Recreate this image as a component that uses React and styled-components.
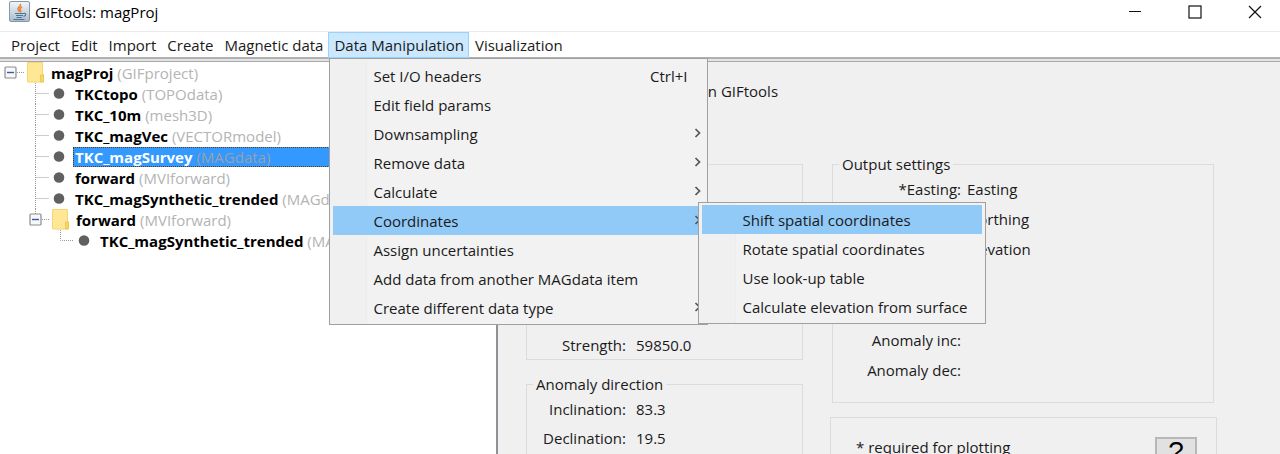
import React from "react";
import styled, { createGlobalStyle } from "styled-components";

const Global = createGlobalStyle`
  * { box-sizing: border-box; }
  body { margin: 0; background: #fff; }
  body, button { font: 15px/20px "Open Sans", "Noto Sans", sans-serif; color: #1a1a1a; }
`;

const Window = styled.div`
  display: flex;
  flex-direction: column;
  height: 100vh;
  overflow: hidden;
`;

const TitleBar = styled.header`
  display: flex;
  align-items: center;
  flex: none;
  height: 31px;
  padding: 0 8px 7px 9px;
  gap: 5px;
  color: #000;
`;

const Title = styled.h1`
  flex: 1;
  margin: 0;
  font-size: 15px;
  font-weight: 400;
`;

const WindowButton = styled.button`
  display: grid;
  place-items: center;
  width: 35px;
  height: 24px;
  margin-left: 20px;
  padding: 0;
  border: 0;
  background: none;
`;

const MenuBar = styled.nav`
  display: flex;
  flex: none;
  height: 31px;
  padding-left: 5px;
  border-top: 1px solid #ebebeb;
  border-bottom: 1px solid #a5a9ae;
  box-shadow: inset 0 -2px #e4e4e4, inset 0 -4px #b0b0b0;
`;

const MenuSlot = styled.div`
  position: relative;
  height: 26px;
`;

const MenuButton = styled.button`
  height: 100%;
  padding: 0 4px 0 5px;
  border: 1px solid ${(p) => (p.$open ? "#99d1ff" : "transparent")};
  background: ${(p) => (p.$open ? "#cce8ff" : "transparent")};
  white-space: nowrap;
`;

const Popup = styled.ul`
  position: absolute;
  z-index: 2;
  top: ${(p) => (p.$nested ? "-4px" : "100%")};
  left: ${(p) => (p.$nested ? "calc(100% - 6px)" : "1px")};
  width: ${(p) => (p.$nested ? 288 : 379)}px;
  margin: 0;
  padding: 2px 3px;
  list-style: none;
  border: 1px solid #a0a0a0;
  background: linear-gradient(90deg, #f0f0f0 36px, #ececec 36px, #ececec 37px, #f2f2f2 37px);
`;

const PopupItem = styled.li`
  position: relative;
`;

const PopupButton = styled.button`
  display: flex;
  align-items: center;
  justify-content: space-between;
  width: 100%;
  height: 29px;
  padding: 0 2px 0 40px;
  border: 0;
  background: ${(p) => (p.$active ? "#91c9f7" : "transparent")};
  text-align: left;
  white-space: nowrap;
`;

const Shortcut = styled.span`
  padding-right: 15px;
`;

const Split = styled.main`
  display: grid;
  grid-template-columns: 31fr 49fr;
  flex: 1;
  min-height: 0;
`;

const TreePane = styled.section`
  min-width: 0;
  overflow: hidden;
  background: #fff;
`;

const Tree = styled.ul`
  margin: 0;
  padding: 0;
  list-style: none;
`;

const TreeRow = styled.li`
  display: flex;
  align-items: center;
  height: 21px;
  padding-left: ${(p) => p.$indent}px;
  white-space: nowrap;
`;

const NodeLabel = styled.span`
  flex: ${(p) => (p.$selected ? 1 : "none")};
  line-height: 18px;
  padding: 0 1px;
  border: 1px dotted ${(p) => (p.$selected ? "#5a3a10" : "transparent")};
  background: ${(p) => (p.$selected ? "#3399ff" : "transparent")};
  color: ${(p) => (p.$selected ? "#fff" : "#000")};
  font-weight: 700;
`;

const NodeType = styled.span`
  color: ${(p) => (p.$selected ? "#9a9fa8" : "#b4b4b4")};
  font-weight: 400;
`;

const Detail = styled.section`
  min-width: 0;
  overflow: hidden;
  padding: 19px 66px 0 28px;
  border-left: 2px solid #8e9196;
  background: #f0f0f0;
`;

const Intro = styled.p`
  margin: 0 0 53px;
  padding-left: 178px;
`;

const Columns = styled.div`
  display: grid;
  grid-template-columns: 277fr 382fr;
  gap: 29px;
`;

const Column = styled.div`
  display: flex;
  flex-direction: column;
  gap: 14px;
  min-width: 0;
`;

const Group = styled.fieldset`
  min-width: 0;
  margin: 0;
  padding: 0 0 ${(p) => p.$bottom}px 6px;
  border: 1px solid #dcdcdc;
`;

const PlainGroup = styled(Group)`
  margin-top: 10px;
  padding-top: 165px;
`;

const Legend = styled.legend`
  padding: 0 3px;
`;

const Fields = styled.dl`
  margin: 0 0 ${(p) => p.$after || 0}px;
`;

const Field = styled.div`
  display: grid;
  grid-template-columns: ${(p) => p.$label}px auto;
  align-items: center;
  height: ${(p) => p.$height}px;
  gap: ${(p) => p.$gap}px;
`;

const Name = styled.dt`
  text-align: right;
  white-space: nowrap;
`;

const Value = styled.dd`
  margin: 0;
`;

const Footer = styled.div`
  display: flex;
  justify-content: space-between;
  align-items: flex-start;
  margin: 0 -3px 0 -2px;
  padding: 19px 19px 20px 25px;
  border: 1px solid #dcdcdc;
`;

const HelpButton = styled.button`
  width: 42px;
  height: 30px;
  padding: 0;
  border: 2px solid #b8b8b8;
  background: #e1e1e1;
  color: #000;
  font: 28px/26px "Liberation Sans", Arial, sans-serif;
`;

const JavaIcon = () => (
  <svg width="21" height="22" viewBox="0 0 21 22" aria-hidden="true">
    <defs>
      <linearGradient id="tile" x1="0" y1="0" x2="0" y2="1">
        <stop offset="0" stopColor="#f4f6f8" />
        <stop offset="1" stopColor="#a9bccb" />
      </linearGradient>
    </defs>
    <rect x="0.5" y="0.5" width="20" height="20" rx="1.5" fill="url(#tile)" stroke="#8598a8" />
    <path d="M11 3c2 2-3 3.500-2 5.500.4 1 1.400 1.300 1.200 2.500M13 6c-2 1-2.800 2-1.600 3.200.6.700.2 1.500-.4 2" fill="none" stroke="#e8833a" strokeWidth="1.600" />
    <path d="M6 12.500h8.500M7 14.500h7M7.500 16.500h5.500M4.500 18.500h11M14.500 12.500c3-1 3 2 0 3" fill="none" stroke="#4d7496" strokeWidth="1.100" />
  </svg>
);

const Chevron = () => (
  <svg width="8" height="12" viewBox="0 0 8 12" aria-hidden="true">
    <path d="M1.500 1 5.500 5 1.500 9" fill="none" stroke="#555" strokeWidth="1.700" />
  </svg>
);

const dots = { stroke: "#999", strokeWidth: 1, strokeDasharray: "1 1" };

const Toggle = ({ child }) => (
  <svg width="22" height="21" viewBox="0 0 22 21" aria-hidden="true">
    {child && <path d="M6.500 0V5" {...dots} />}
    <path d="M13 10.500H21" {...dots} />
    <rect x="1" y="5" width="11" height="11" rx="1" fill="#f8f8f8" stroke="#8c8c8c" strokeWidth="1.200" />
    <path d="M3 10.500h7" stroke="#3b56b0" strokeWidth="1.400" />
  </svg>
);

const Folder = () => (
  <svg width="23" height="21" viewBox="0 0 23 21" aria-hidden="true">
    <path d="M1.500.5h15v12h1v7.500h-16z" fill="#ffe795" stroke="#f3d673" />
    <path d="M14.500 13h3v7h-3z" fill="#f8d566" stroke="#eac550" strokeWidth=".8" />
  </svg>
);

const Leaf = ({ last }) => (
  <svg width="46" height="21" viewBox="0 0 46 21" aria-hidden="true">
    <path d={last ? "M8.500 0V10.500H22" : "M8.500 0V21M8.500 10.500H22"} fill="none" {...dots} />
    <circle cx="32" cy="10.500" r="5.300" fill="#606060" />
  </svg>
);

const nodes = [
  { name: "magProj", type: "GIFproject", kind: "root" },
  { name: "TKCtopo", type: "TOPOdata" },
  { name: "TKC_10m", type: "mesh3D" },
  { name: "TKC_magVec", type: "VECTORmodel" },
  { name: "TKC_magSurvey", type: "MAGdata", selected: true },
  { name: "forward", type: "MVIforward" },
  { name: "TKC_magSynthetic_trended", type: "MAGdata" },
  { name: "forward", type: "MVIforward", kind: "branch" },
  { name: "TKC_magSynthetic_trended", type: "MAGdata", kind: "last" },
];

const indents = { root: 4, branch: 29, last: 52 };

const menus = ["Project", "Edit", "Import", "Create", "Magnetic data", "Data Manipulation", "Visualization"];

const actions = [
  { label: "Set I/O headers", shortcut: "Ctrl+I" },
  { label: "Edit field params" },
  { label: "Downsampling", more: true },
  { label: "Remove data", more: true },
  { label: "Calculate", more: true },
  {
    label: "Coordinates",
    more: true,
    items: [
      { label: "Shift spatial coordinates", active: true },
      { label: "Rotate spatial coordinates" },
      { label: "Use look-up table" },
      { label: "Calculate elevation from surface" },
    ],
  },
  { label: "Assign uncertainties" },
  { label: "Add data from another MAGdata item" },
  { label: "Create different data type", more: true },
];

const Menu = ({ items, nested }) => (
  <Popup $nested={nested}>
    {items.map((item) => (
      <PopupItem key={item.label}>
        <PopupButton $active={item.active || item.items}>
          {item.label}
          {item.shortcut && <Shortcut>{item.shortcut}</Shortcut>}
          {item.more && <Chevron />}
        </PopupButton>
        {item.items && <Menu items={item.items} nested />}
      </PopupItem>
    ))}
  </Popup>
);

const FieldList = ({ rows, label, height, gap, after }) => (
  <Fields $after={after}>
    {rows.map(([name, value]) => (
      <Field key={name} $label={label} $height={height} $gap={gap}>
        <Name>{name}:</Name>
        <Value>{value}</Value>
      </Field>
    ))}
  </Fields>
);

export default function App() {
  return (
    <Window>
      <Global />
      <TitleBar>
        <JavaIcon />
        <Title>GIFtools: magProj</Title>
        <WindowButton aria-label="Minimize">
          <svg width="14" height="14"><path d="M1 6.500h12" stroke="#111" /></svg>
        </WindowButton>
        <WindowButton aria-label="Maximize">
          <svg width="14" height="14"><rect x="1" y="1" width="12" height="12" fill="none" stroke="#111" strokeWidth="1.200" /></svg>
        </WindowButton>
        <WindowButton aria-label="Close">
          <svg width="14" height="14"><path d="M1 1 13 13M13 1 1 13" stroke="#111" strokeWidth="1.200" /></svg>
        </WindowButton>
      </TitleBar>
      <MenuBar>
        {menus.map((name) => {
          const open = name === "Data Manipulation";
          return (
            <MenuSlot key={name}>
              <MenuButton $open={open}>{name}</MenuButton>
              {open && <Menu items={actions} />}
            </MenuSlot>
          );
        })}
      </MenuBar>
      <Split>
        <TreePane>
          <Tree>
            {nodes.map((node, i) => (
              <TreeRow key={i} $indent={indents[node.kind] || 27}>
                {node.kind === "root" || node.kind === "branch" ? (
                  <>
                    <Toggle child={node.kind === "branch"} />
                    <Folder />
                  </>
                ) : (
                  <Leaf last={node.kind === "last"} />
                )}
                <NodeLabel $selected={node.selected}>
                  {node.name} <NodeType $selected={node.selected}>({node.type})</NodeType>
                </NodeLabel>
              </TreeRow>
            ))}
          </Tree>
        </TreePane>
        <Detail>
          <Intro>in GIFtools</Intro>
          <Columns>
            <Column>
              <PlainGroup $bottom={0}>
                <FieldList rows={[["Strength", "59850.0"]]} label={93} height={29} gap={10} />
              </PlainGroup>
              <Group $bottom={30}>
                <Legend>Anomaly direction</Legend>
                <FieldList rows={[["Inclination", "83.3"], ["Declination", "19.5"]]} label={93} height={29} gap={10} />
              </Group>
            </Column>
            <Column>
              <Group $bottom={17}>
                <Legend>Output settings</Legend>
                <FieldList
                  rows={[["*Easting", "Easting"], ["*Northing", "Northing"], ["*Elevation", "Elevation"]]}
                  label={122}
                  height={30}
                  gap={6}
                  after={61}
                />
                <FieldList rows={[["Anomaly inc", ""], ["Anomaly dec", ""]]} label={122} height={30} gap={6} />
              </Group>
              <Footer>
                <span>* required for plotting</span>
                <HelpButton aria-label="Help">?</HelpButton>
              </Footer>
            </Column>
          </Columns>
        </Detail>
      </Split>
    </Window>
  );
}
